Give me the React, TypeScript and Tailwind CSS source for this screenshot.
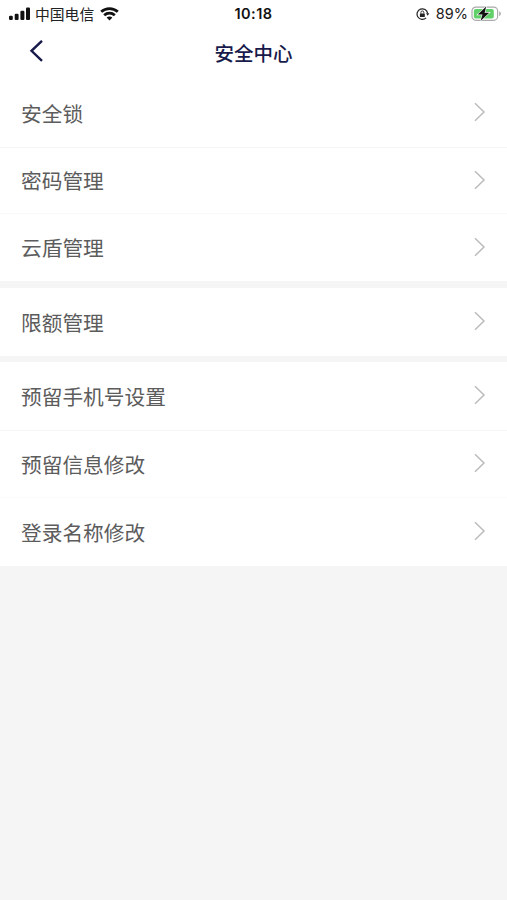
import React from 'react';

type Row = { label: string; height: string; divider?: string };

const groups: Row[][] = [
  [
    { label: '安全锁', height: 'h-[69px]', divider: 'border-b border-[#f5f5f5]' },
    { label: '密码管理', height: 'h-[66px]', divider: 'border-b border-[#f9f9f9]' },
    { label: '云盾管理', height: 'h-[67px]' },
  ],
  [{ label: '限额管理', height: 'h-[68px]' }],
  [
    { label: '预留手机号设置', height: 'h-[69px]', divider: 'border-b border-[#f6f6f6]' },
    { label: '预留信息修改', height: 'h-[67px]', divider: 'border-b border-[#fbfbfb]' },
    { label: '登录名称修改', height: 'h-[68px]' },
  ],
];

function Signal() {
  return (
    <svg className="ml-[9px] block" width="22" height="14" viewBox="0 0 22 14" fill="#111">
      <rect x="0" y="8.8" width="3.8" height="4.2" rx="1.2" />
      <rect x="5.7" y="6.8" width="3.9" height="6.2" rx="1.1" />
      <rect x="11.4" y="3.8" width="4" height="9.2" rx="1.1" />
      <rect x="17" y="0.6" width="4" height="12.4" rx="1.1" />
    </svg>
  );
}

function Wifi() {
  return (
    <svg className="ml-[6px] block" width="19" height="14" viewBox="0 0 19 14" fill="none" stroke="#111" strokeWidth="2.8">
      <path d="M1.2 4.8C5.9 .5 13.1 .5 17.8 4.8" />
      <path d="M4.2 8.2C7.2 5.4 11.8 5.4 14.8 8.2" />
      <path d="M9.5 13.4L6.6 10.6C8.2 9.2 10.8 9.2 12.4 10.6Z" fill="#111" stroke="none" />
    </svg>
  );
}

function RotationLock() {
  return (
    <svg className="block" width="14" height="14" viewBox="0 0 14 14" fill="none" stroke="#222" strokeWidth="1.2">
      <path d="M10.1 10.9A5.3 5.3 0 1 1 11.6 6.4" />
      <path d="M10.1 6.3h3.2L11.7 8.7z" fill="#222" stroke="none" />
      <rect x="3.9" y="6.4" width="4.9" height="3.7" rx=".6" fill="#222" stroke="none" />
      <path d="M4.9 6.6V5.4a1.45 1.45 0 0 1 2.9 0v1.2" strokeWidth=".9" />
    </svg>
  );
}

function Battery() {
  return (
    <svg className="ml-[3px] block" width="31" height="16" viewBox="0 0 31 16">
      <rect x="1" y="1.1" width="25.6" height="13.2" rx="3.8" fill="#fff" stroke="#aaa" strokeWidth="1.2" />
      <rect x="2.8" y="2.9" width="20" height="9.6" rx="2" fill="#62d068" />
      <path d="M28.2 5.3c2.2 .8 2.2 4 0 4.8z" fill="#aaa" />
      <path d="M15.2 .6L6.8 8.6h4.7L9.5 14.9l8.7-8.2h-4.6z" fill="#111" stroke="#fff" strokeWidth="1.2" paintOrder="stroke" />
    </svg>
  );
}

function ListRow({ label, height, divider = '' }: Row) {
  return (
    <div className={`flex items-center justify-between bg-white pl-[21px] pr-[21px] ${height} ${divider}`}>
      <span className="pt-[3px] text-[20.7px] leading-[30px] text-[#5c5c5c]">{label}</span>
      <svg className="mb-[2px] block" width="13" height="20" viewBox="0 0 13 20" fill="none" stroke="#bcbcbc" strokeWidth="1.5">
        <path d="M2 1.2L11 10L2 18.8" />
      </svg>
    </div>
  );
}

export default function App() {
  return (
    <main className="h-[900px] w-full overflow-hidden bg-[#f5f5f5] font-['Inter','Noto_Sans_CJK_SC',sans-serif]">
      <header className="h-[79px] bg-white">
        <div className="grid h-[27px] grid-cols-[1fr_auto_1fr] items-center text-[#222]">
          <div className="flex items-center">
            <Signal />
            <span className="ml-[4px] pt-[2px] text-[14.8px] leading-[20px]">中国电信</span>
            <Wifi />
          </div>
          <span className="text-[14.5px] font-semibold leading-[20px] tracking-[0.5px] text-[#111]">10:18</span>
          <div className="flex items-center justify-end pr-[5px]">
            <RotationLock />
            <span className="ml-[6px] text-[14.5px] leading-[20px]">89%</span>
            <Battery />
          </div>
        </div>
        <div className="grid h-[50px] grid-cols-[1fr_auto_1fr] items-center">
          <svg className="mb-[2px] ml-[29px] block" width="16" height="22" viewBox="0 0 16 22" fill="none" stroke="#171a4a" strokeWidth="2.4">
            <path d="M13 .8L2.5 10.8L13 20.8" />
          </svg>
          <h1 className="pt-[3px] text-[19.5px] font-medium leading-[28px] text-[#171a4a]">安全中心</h1>
          <span />
        </div>
      </header>
      <div className="flex flex-col">
        {groups.map((group, i) => (
          <section key={i} className={i === 1 ? 'mt-[7px] mb-[6px]' : ''}>
            {group.map((row) => (
              <ListRow key={row.label} {...row} />
            ))}
          </section>
        ))}
      </div>
    </main>
  );
}
